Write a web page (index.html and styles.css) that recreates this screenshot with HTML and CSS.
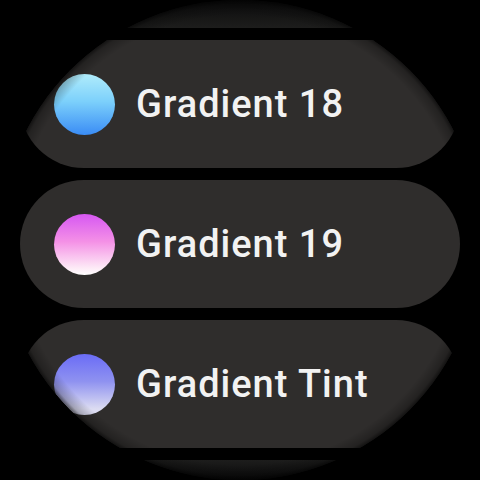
FILE: index.html
```html
<!DOCTYPE html>
<html>
<head>
<meta charset="utf-8">
<link rel="stylesheet" href="styles.css">
</head>
<body>
<div class="screen">
  <div class="list">
    <div class="chip edge edge-top"></div>
    <div class="chip">
      <span class="dot dot-18"></span>
      <span class="label">Gradient 18</span>
    </div>
    <div class="chip">
      <span class="dot dot-19"></span>
      <span class="label">Gradient 19</span>
    </div>
    <div class="chip">
      <span class="dot dot-tint"></span>
      <span class="label">Gradient Tint</span>
    </div>
    <div class="chip edge edge-bottom"></div>
  </div>
  <div class="vignette"></div>
</div>
</body>
</html>
```
FILE: styles.css
```css
html, body {
  margin: 0;
  padding: 0;
  background: #000;
}
.screen {
  position: relative;
  width: 480px;
  height: 480px;
  overflow: hidden;
  background: #000;
  clip-path: circle(240px at 240px 240px);
}
.list {
  height: 480px;
  display: flex;
  flex-direction: column;
  justify-content: center;
  gap: 12px;
  padding-top: 8px;
  box-sizing: border-box;
}
.chip {
  flex: 0 0 128px;
  margin: 0 20px;
  border-radius: 64px;
  background: #2f2d2c;
  display: flex;
  align-items: center;
  padding-left: 34px;
  gap: 21px;
}
.edge-top {
  background: linear-gradient(to top, #1d1d1c 0px, #121212 18px, #040404 34px, #000 44px);
}
.edge-bottom {
  background: linear-gradient(to bottom, #1d1d1c 0px, #121212 12px, #040404 24px, #000 34px);
}
.dot {
  width: 61px;
  height: 61px;
  border-radius: 50%;
  flex: 0 0 61px;
}
.dot-18 { background: linear-gradient(#b0ecfb, #7cd0fb 45%, #3a8cf5); }
.dot-19 { background: linear-gradient(#d657f2, #f490e6 45%, #fde9f6 88%, #ffffff); }
.dot-tint { background: linear-gradient(#6a6cf6, #8f92f0 45%, #dcdcf2 90%); }
.label {
  font-family: Roboto, "Liberation Sans", sans-serif;
  font-weight: 500;
  font-size: 38px;
  color: #f2f2f2;
  letter-spacing: 1px;
  white-space: nowrap;
}
.vignette {
  position: absolute;
  inset: 0;
  pointer-events: none;
  background: radial-gradient(circle 240px at 240px 240px, rgba(0,0,0,0) 225px, rgba(0,0,0,0.25) 236px, rgba(0,0,0,0.6) 240px);
}
```
